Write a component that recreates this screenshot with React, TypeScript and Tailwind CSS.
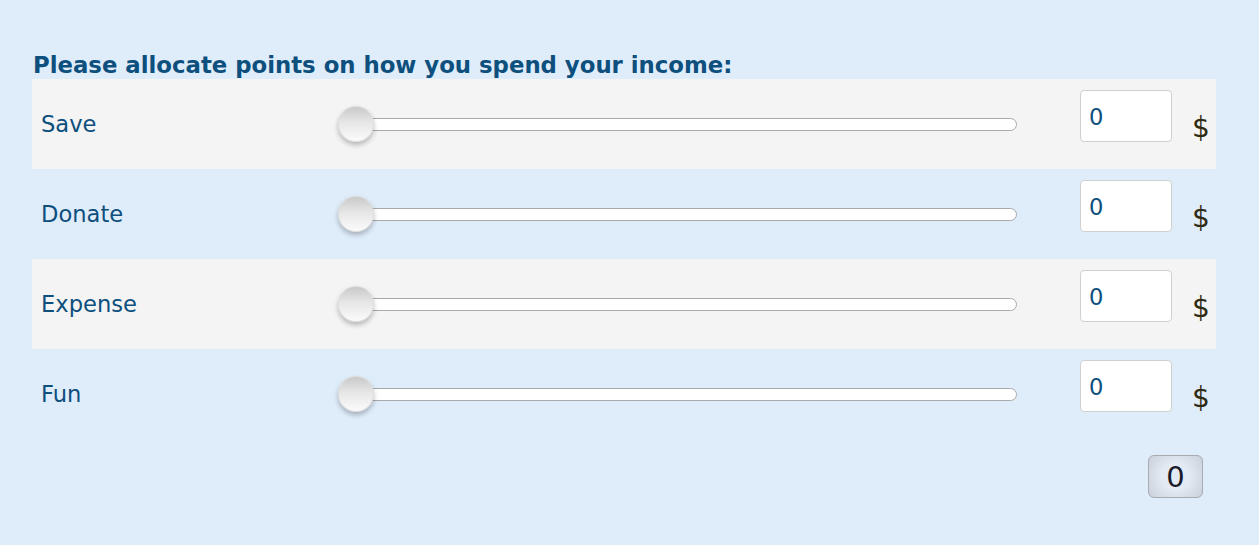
const rows = ["Save", "Donate", "Expense", "Fun"];

const Slider = () => (
  <div className="relative h-[40px] w-[680px] flex items-center">
    <div className="ml-[2px] h-[13px] w-[677px] rounded-full border border-[#a9a9a9] bg-white" />
    <div className="absolute left-0 top-[2px] h-[36px] w-[36px] rounded-full border border-[#dcdcdc] bg-[linear-gradient(to_bottom,#c9c9c9_0%,#e6e6e6_45%,#fbfbfb_100%)] shadow-[0_3px_5px_rgba(0,0,0,0.25)]" />
  </div>
);

const App = () => {
  return (
    <div className="min-h-[545px] bg-[#dfecfa] pl-[32px] pr-[43px] pt-[51px] font-['DejaVu_Sans',Verdana,sans-serif]">
      <h1 className="ml-[1px] text-[22.8px] font-bold leading-[28px] text-[#0d4f7d]">
        Please allocate points on how you spend your income:
      </h1>
      <div className="flex flex-col">
        {rows.map((r, i) => (
          <div key={r} className={`flex h-[90px] items-center pl-[9px] ${i % 2 === 0 ? "bg-[#f4f4f4]" : ""}`}>
            <div className="mt-[2px] w-[297px] text-[22.6px] text-[#0d4f7d]">{r}</div>
            <Slider />
            <input
              readOnly
              value="0"
              className="mb-[16px] ml-[62px] h-[52px] w-[92px] rounded-[4px] border border-[#cfcfcf] bg-white px-[8px] pt-[2px] text-[22.6px] text-[#0d4f7d] outline-none"
            />
            <span className="ml-[20px] mt-[8px] text-[28px] text-[#2f2a10]">$</span>
          </div>
        ))}
      </div>
      <div className="mr-[13px] mt-[16px] flex justify-end">
        <div className="flex h-[43px] w-[55px] items-center justify-center rounded-[6px] border border-[#a8acb2] bg-[radial-gradient(circle,#e3eaf3_40%,#c9d0d9_100%)] pt-[2px] text-[29px] text-[#1a1a2a]">
          0
        </div>
      </div>
    </div>
  );
};

export default App;
